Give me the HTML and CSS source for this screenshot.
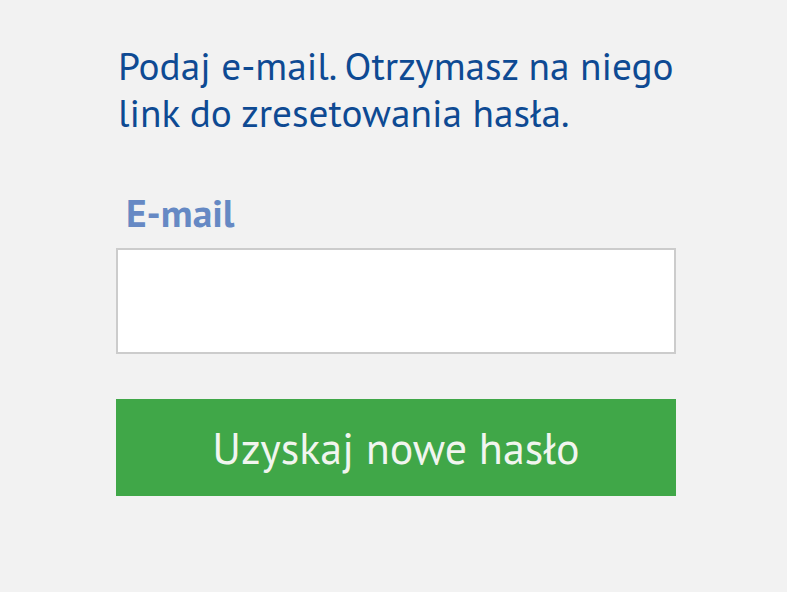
FILE: index.html
```html
<!DOCTYPE html>
<html lang="pl">
<head>
<meta charset="utf-8">
<link rel="stylesheet" href="styles.css">
</head>
<body>
<main class="reset">
  <p class="intro">Podaj e-mail. Otrzymasz na niego link do zresetowania hasła.</p>
  <form class="form">
    <label class="label" for="email">E-mail</label>
    <input class="input" id="email" type="email">
    <button class="submit" type="button">Uzyskaj nowe hasło</button>
  </form>
</main>
</body>
</html>
```
FILE: styles.css
```css
html, body {
  margin: 0;
  padding: 0;
  background: #f2f2f2;
}
body {
  font-family: "PT Sans", Lato, "Noto Sans", sans-serif;
}
.reset {
  width: 560px;
  margin-left: 116px;
  padding-top: 42px;
}
.intro {
  margin: 0 -10px 0 2px;
  font-size: 39.3px;
  line-height: 47px;
  color: #0e4a93;
}
.form {
  display: flex;
  flex-direction: column;
  margin-top: 57px;
}
.label {
  margin-left: 10px;
  font-size: 39.5px;
  font-weight: 700;
  color: #6689c4;
  line-height: 40px;
  margin-bottom: 15px;
}
.input {
  box-sizing: border-box;
  height: 106px;
  width: 560px;
  margin: 0;
  border: 2px solid #cccccc;
  background: #fff;
  outline: none;
}
.submit {
  margin-top: 45px;
  height: 97px;
  width: 560px;
  border: 0;
  background: #40a748;
  color: #f1f5ef;
  font-family: inherit;
  font-size: 44px;
  padding: 0;
}
```
